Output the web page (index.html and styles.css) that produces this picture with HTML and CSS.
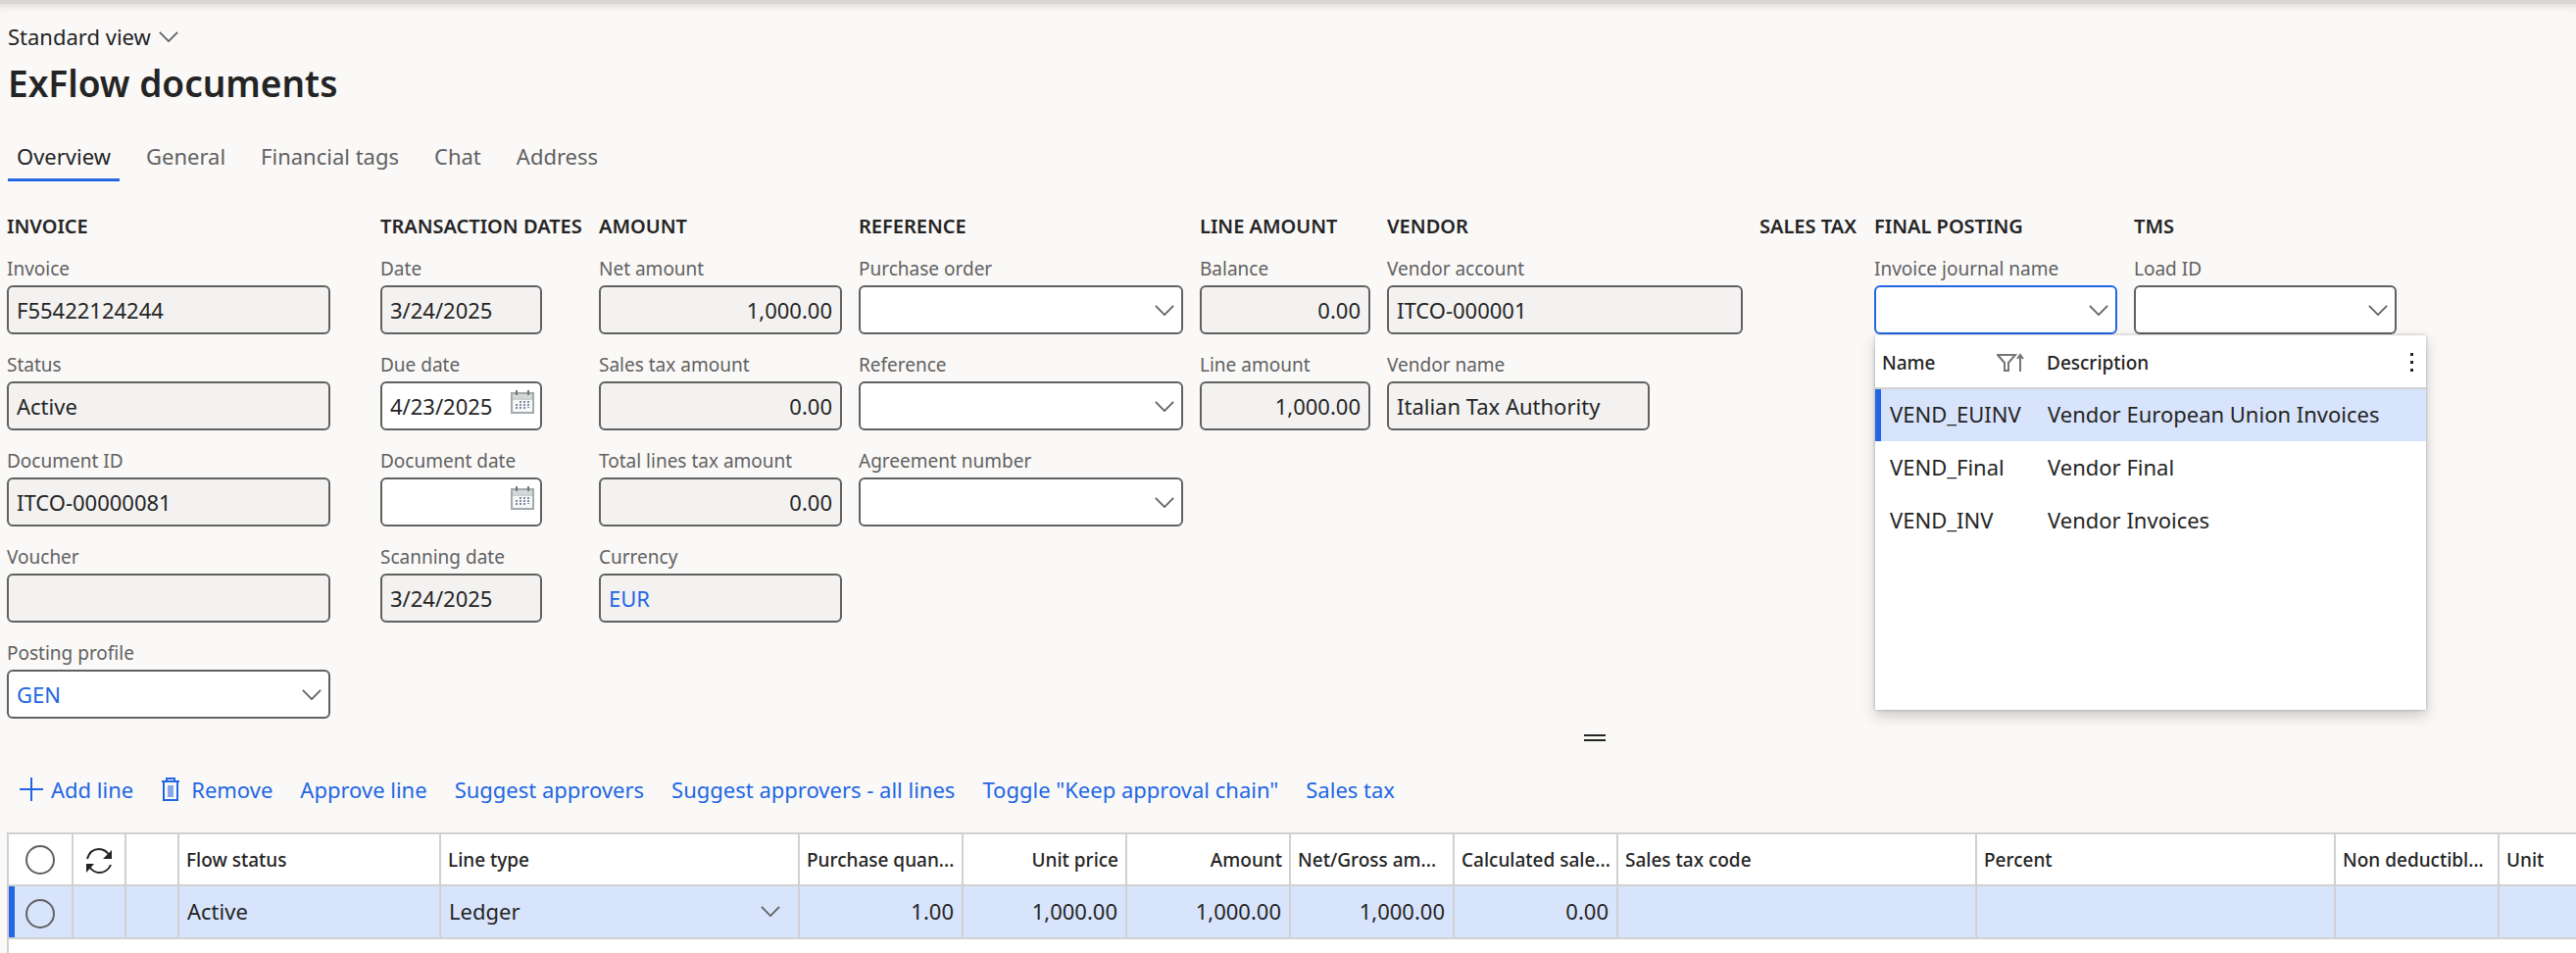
FILE: index.html
```html
<!DOCTYPE html>
<html lang="en">
<head>
    <meta charset="UTF-8">
    <meta name="viewport" content="width=device-width, initial-scale=1.0">
    <title>ExFlow documents</title>
    <link rel="stylesheet" href="styles.css">
</head>
<body>

    <svg class="sprite" aria-hidden="true">
        <symbol id="chevron" viewBox="0 0 22 12"><path d="M1 1l10 10L21 1" fill="none" stroke="currentColor" stroke-width="2"/></symbol>
        <symbol id="calendar" viewBox="0 0 24 24">
            <path d="M1 3h22v20H1z" fill="#f6f8f8" stroke="#a3aaaa" stroke-width="2"/>
            <path d="M2 4h20v4H2z" fill="#d3d8d6"/>
            <path d="M2 9h20" stroke="#a3aaaa" stroke-width="1"/>
            <path d="M6 0v5M18 0v5" stroke="#6f7680" stroke-width="2"/>
            <path d="M10 11v9M14 11v9M18 11v7M6 14v6" stroke="#8089a6" stroke-width="2" stroke-dasharray="2 1"/>
        </symbol>
    </svg>

    <header class="page-header">
        <button class="view-picker" type="button">Standard view <svg class="chevron"><use href="#chevron"/></svg></button>
        <h1>ExFlow documents</h1>
        <nav class="tabs">
            <a class="active" href="#overview">Overview</a>
            <a href="#general">General</a>
            <a href="#tags">Financial tags</a>
            <a href="#chat">Chat</a>
            <a href="#address">Address</a>
        </nav>
    </header>

    <main>
        <!-- Header fields -->
        <form class="groups" id="overview">
            <section class="group group-invoice">
                <h2>Invoice</h2>
                <div class="field"><label for="invoice">Invoice</label><input id="invoice" value="F55422124244" readonly></div>
                <div class="field"><label for="status">Status</label><input id="status" value="Active" readonly></div>
                <div class="field"><label for="docId">Document ID</label><input id="docId" value="ITCO-00000081" readonly></div>
                <div class="field"><label for="voucher">Voucher</label><input id="voucher" readonly></div>
                <div class="field combo"><label for="profile">Posting profile</label><select id="profile" class="link"><option>GEN</option></select><svg class="chevron"><use href="#chevron"/></svg></div>
            </section>

            <section class="group group-dates">
                <h2>Transaction dates</h2>
                <div class="field"><label for="date">Date</label><input id="date" value="3/24/2025" readonly></div>
                <div class="field combo"><label for="dueDate">Due date</label><input id="dueDate" value="4/23/2025"><svg class="calendar"><use href="#calendar"/></svg></div>
                <div class="field combo"><label for="docDate">Document date</label><input id="docDate"><svg class="calendar"><use href="#calendar"/></svg></div>
                <div class="field"><label for="scanDate">Scanning date</label><input id="scanDate" value="3/24/2025" readonly></div>
            </section>

            <section class="group group-amount">
                <h2>Amount</h2>
                <div class="field"><label for="net">Net amount</label><input id="net" class="num" value="1,000.00" readonly></div>
                <div class="field"><label for="salesTax">Sales tax amount</label><input id="salesTax" class="num" value="0.00" readonly></div>
                <div class="field"><label for="linesTax">Total lines tax amount</label><input id="linesTax" class="num" value="0.00" readonly></div>
                <div class="field"><label for="currency">Currency</label><input id="currency" class="link" value="EUR" readonly></div>
            </section>

            <section class="group group-reference">
                <h2>Reference</h2>
                <div class="field combo"><label for="po">Purchase order</label><select id="po"><option></option></select><svg class="chevron"><use href="#chevron"/></svg></div>
                <div class="field combo"><label for="ref">Reference</label><select id="ref"><option></option></select><svg class="chevron"><use href="#chevron"/></svg></div>
                <div class="field combo"><label for="agreement">Agreement number</label><select id="agreement"><option></option></select><svg class="chevron"><use href="#chevron"/></svg></div>
            </section>

            <section class="group group-line">
                <h2>Line amount</h2>
                <div class="field"><label for="balance">Balance</label><input id="balance" class="num" value="0.00" readonly></div>
                <div class="field"><label for="lineAmount">Line amount</label><input id="lineAmount" class="num" value="1,000.00" readonly></div>
            </section>

            <section class="group group-vendor">
                <h2>Vendor</h2>
                <div class="field"><label for="vendor">Vendor account</label><input id="vendor" value="ITCO-000001" readonly></div>
                <div class="field vendor-name"><label for="vendorName">Vendor name</label><input id="vendorName" value="Italian Tax Authority" readonly></div>
            </section>

            <section class="group group-tax">
                <h2>Sales tax</h2>
            </section>

            <section class="group group-posting">
                <h2>Final posting</h2>
                <div class="field combo">
                    <label for="journal">Invoice journal name</label><select id="journal" class="focused"><option></option></select><svg class="chevron"><use href="#chevron"/></svg>
                    <div class="lookup">
                        <table>
                            <thead>
                                <tr>
                                    <th class="name">
                                        <div class="lookup-head">Name
                                            <svg class="filter" viewBox="0 0 28 20"><path d="M1 2h18l-7 8v8H8v-8zM24 19V3M21 6l3-4 3 4" fill="none" stroke="currentColor" stroke-width="2"/></svg>
                                        </div>
                                    </th>
                                    <th>
                                        <div class="lookup-head">Description
                                            <button class="more" type="button" aria-label="More options"><svg viewBox="0 0 4 20"><path d="M0 0h3v3H0zM0 8h3v3H0zM0 16h3v3H0z" fill="currentColor"/></svg></button>
                                        </div>
                                    </th>
                                </tr>
                            </thead>
                            <tbody>
                                <tr class="selected"><td>VEND_EUINV</td><td>Vendor European Union Invoices</td></tr>
                                <tr><td>VEND_Final</td><td>Vendor Final</td></tr>
                                <tr><td>VEND_INV</td><td>Vendor Invoices</td></tr>
                            </tbody>
                        </table>
                    </div>
                </div>
            </section>

            <section class="group group-tms">
                <h2>TMS</h2>
                <div class="field combo"><label for="loadId">Load ID</label><select id="loadId"><option></option></select><svg class="chevron"><use href="#chevron"/></svg></div>
            </section>
        </form>

        <div class="splitter"></div>

        <!-- Lines -->
        <div class="toolbar">
            <button type="button"><svg class="plus" viewBox="0 0 24 24"><path d="M12 0v24M0 12h24" stroke="currentColor" stroke-width="2"/></svg>Add line</button>
            <button type="button"><svg class="trash" viewBox="0 0 20 24"><path d="M1 4h18M6 3V1h8v2M3 5v18h14V5" fill="none" stroke="currentColor" stroke-width="2"/><path d="M7 8h6v12H7z" fill="currentColor" opacity="0.55"/></svg>Remove</button>
            <button type="button">Approve line</button>
            <button type="button">Suggest approvers</button>
            <button type="button">Suggest approvers - all lines</button>
            <button type="button">Toggle "Keep approval chain"</button>
            <button type="button">Sales tax</button>
        </div>

        <div class="grid">
            <table class="lines">
                <colgroup>
                    <col class="w-check"><col class="w-icon"><col class="w-icon"><col class="w-status"><col class="w-wide">
                    <col class="w-num"><col class="w-num"><col class="w-num"><col class="w-num"><col class="w-num">
                    <col class="w-wide"><col class="w-wide"><col class="w-num"><col>
                </colgroup>
                <thead>
                    <tr>
                        <th class="center"><input type="checkbox" aria-label="Select all lines"></th>
                        <th class="center"><svg class="refresh" viewBox="0 0 28 28"><path d="M2 12C4 5 9 2 14 2c5 0 8 2 11 7M26 18c-2 5-7 8-12 8-4 0-7-2-10-6" fill="none" stroke="currentColor" stroke-width="2"/><path d="M27 3v9h-9zM1 26v-9h8z" fill="currentColor"/></svg></th>
                        <th></th>
                        <th>Flow status</th>
                        <th>Line type</th>
                        <th>Purchase quan...</th>
                        <th class="num">Unit price</th>
                        <th class="num">Amount</th>
                        <th>Net/Gross am...</th>
                        <th>Calculated sale...</th>
                        <th>Sales tax code</th>
                        <th>Percent</th>
                        <th>Non deductibl...</th>
                        <th>Unit</th>
                    </tr>
                </thead>
                <tbody>
                    <tr class="selected">
                        <td class="center"><input type="checkbox" aria-label="Select line"></td>
                        <td></td>
                        <td></td>
                        <td>Active</td>
                        <td><div class="line-type">Ledger <svg class="chevron"><use href="#chevron"/></svg></div></td>
                        <td class="num">1.00</td>
                        <td class="num">1,000.00</td>
                        <td class="num">1,000.00</td>
                        <td class="num">1,000.00</td>
                        <td class="num">0.00</td>
                        <td></td>
                        <td></td>
                        <td></td>
                        <td></td>
                    </tr>
                </tbody>
            </table>
        </div>
    </main>

</body>
</html>
```
FILE: styles.css
```css
* {
    box-sizing: border-box;
}

body {
    margin: 0;
    min-height: 100vh;
    display: flex;
    flex-direction: column;
    overflow: hidden;
    background-color: #faf9f8;
    color: #242424;
    font-family: "Noto Sans", sans-serif;
    font-size: 22px;
    line-height: 30px;
}

button, input, select {
    font: inherit;
    color: inherit;
}

button {
    border: none;
    background: none;
    padding: 0;
    cursor: pointer;
}

.sprite {
    display: none;
}

.chevron {
    width: 20px;
    height: 11px;
    color: #616161;
}

.page-header {
    border-top: 4px solid #d8d7d5;
    box-shadow: inset 0 8px 8px -6px rgba(0, 0, 0, 0.12);
    padding: 18px 8px 0;
}

.view-picker {
    display: flex;
    align-items: center;
    gap: 8px;
}

h1 {
    margin: 8px 0 0;
    font-size: 37px;
    line-height: 50px;
    font-weight: 600;
}

.tabs {
    display: flex;
    gap: 18px;
    margin-top: 34px;
}

.tabs a {
    padding: 0 9px 8px;
    border-bottom: 3px solid transparent;
    color: #616161;
    text-decoration: none;
}

.tabs a.active {
    color: #242424;
    border-bottom-color: #2266e3;
}

main {
    flex: 1;
    display: flex;
    flex-direction: column;
}

/* Header fields */
.groups {
    display: flex;
    gap: 17px;
    padding: 32px 7px 0;
}

.group {
    flex: none;
    display: flex;
    flex-direction: column;
    gap: 18px;
}

.group h2 {
    margin: 0 0 -2px;
    font-size: 20px;
    line-height: 28px;
    font-weight: 600;
    text-transform: uppercase;
    white-space: nowrap;
}

.group-invoice {
    width: 364px;
    padding-right: 34px;
}

.group-dates {
    width: 206px;
}

.group-dates .field {
    width: 165px;
}

.group-amount, .group-posting {
    width: 248px;
}

.group-reference {
    width: 331px;
}

.group-line {
    width: 174px;
}

.group-vendor {
    width: 363px;
}

.group-tax {
    width: 100px;
}

.group-tms, .vendor-name {
    width: 268px;
}

.field {
    display: flex;
    flex-direction: column;
    position: relative;
}

.field label {
    padding-bottom: 4px;
    font-size: 19px;
    line-height: 26px;
    color: #616161;
    white-space: nowrap;
}

.field input, .field select {
    width: 100%;
    height: 50px;
    padding: 0 8px;
    border: 2px solid #616161;
    border-radius: 6px;
    background-color: #fff;
    appearance: none;
}

.field input:read-only {
    background-color: #f3f2f1;
}

.field .link {
    color: #2266e3;
}

.field .focused {
    border-color: #2266e3;
}

.field .num {
    text-align: right;
}

/* icons lie over the right end of the input */
.combo > .chevron {
    position: absolute;
    right: 9px;
    top: 50px;
    pointer-events: none;
}

.calendar {
    position: absolute;
    right: 8px;
    top: 39px;
    width: 24px;
    height: 24px;
}

/* Lookup */
.lookup {
    position: absolute;
    left: 1px;
    top: 81px;
    z-index: 1;
    width: 562px;
    height: 382px;
    background-color: #fff;
    box-shadow: 0 6px 14px rgba(0, 0, 0, 0.2), 0 0 3px rgba(0, 0, 0, 0.25);
}

.lookup table {
    width: 100%;
    border-collapse: collapse;
}

.lookup th {
    height: 54px;
    padding: 2px 12px 0 7px;
    border-bottom: 2px solid #d1d1d1;
    font-size: 19px;
    font-weight: 500;
    text-align: left;
}

.lookup .name {
    width: 168px;
    padding-right: 16px;
}

.lookup-head {
    display: flex;
    justify-content: space-between;
    align-items: center;
}

.filter {
    width: 28px;
    height: 20px;
    color: #757575;
}

.more svg {
    display: block;
    width: 4px;
    height: 20px;
}

.lookup td {
    height: 54px;
    padding: 0 0 3px 8px;
    white-space: nowrap;
}

.lookup td:first-child {
    padding-left: 15px;
}

.selected {
    background-color: #d8e4fc;
}

.selected td:first-child {
    box-shadow: inset 6px 0 #2266e3;
}

.splitter {
    width: 22px;
    height: 7px;
    margin: 16px 0 0 1616px;
    border: solid #242424;
    border-width: 2px 0;
}

/* Lines */
.toolbar {
    display: flex;
    gap: 28px;
    padding: 34px 20px 29px;
    color: #2266e3;
}

.toolbar button {
    display: flex;
    align-items: center;
    white-space: nowrap;
}

.plus {
    width: 24px;
    height: 24px;
    margin-right: 8px;
}

.trash {
    width: 20px;
    height: 24px;
    margin-right: 11px;
}

.grid {
    flex: 1;
    margin-left: 7px;
    border-top: 2px solid #d1d1d1;
    border-left: 2px solid #d1d1d1;
    background-color: #fff;
}

.lines {
    width: 100%;
    table-layout: fixed;
    border-collapse: collapse;
}

.w-check {
    width: 65px;
}

.w-icon {
    width: 54px;
}

.w-status {
    width: 267px;
}

.w-wide {
    width: 366px;
}

.w-num {
    width: 167px;
}

.lines th, .lines td {
    height: 54px;
    border-right: 2px solid #d1d1d1;
    border-bottom: 2px solid #d1d1d1;
    text-align: left;
    white-space: nowrap;
}

.lines th {
    height: 52px;
    padding: 0 7px;
    font-size: 19px;
    font-weight: 500;
}

.lines td {
    padding: 0 8px 2px;
}

.lines th:last-child, .lines td:last-child {
    border-right: none;
}

.lines .num {
    text-align: right;
}

.lines .center {
    padding: 0;
    text-align: center;
}

.lines input {
    width: 30px;
    height: 30px;
    margin: 0;
    border: 2px solid #616161;
    border-radius: 50%;
    appearance: none;
    vertical-align: middle;
}

.refresh {
    width: 28px;
    height: 28px;
    vertical-align: middle;
}

.line-type {
    display: flex;
    justify-content: space-between;
    align-items: center;
    padding-right: 10px;
}
```
